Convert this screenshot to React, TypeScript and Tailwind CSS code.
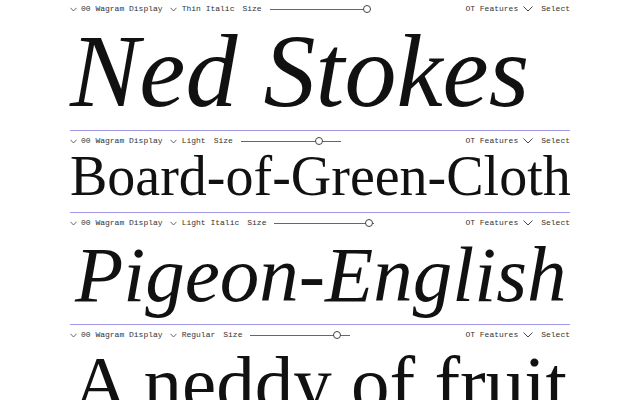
import React from "react";

type Row = {
  style: string;
  sample: string;
  italic: boolean;
  knob: number;
  blockClass: string;
  textClass: string;
};

const rows: Row[] = [
  {
    style: "Thin Italic",
    sample: "Ned Stokes",
    italic: true,
    knob: 97,
    blockClass: "h-[132px]",
    textClass: "text-[104px] leading-[104px]",
  },
  {
    style: "Light",
    sample: "Board-of-Green-Cloth",
    italic: false,
    knob: 78,
    blockClass: "h-[82px]",
    textClass: "text-[56px] leading-[50px]",
  },
  {
    style: "Light Italic",
    sample: "Pigeon-English",
    italic: true,
    knob: 95,
    blockClass: "h-[112px]",
    textClass: "text-[79px] leading-[84px] ml-[5px]",
  },
  {
    style: "Regular",
    sample: "A neddy of fruit",
    italic: false,
    knob: 87,
    blockClass: "h-[120px]",
    textClass: "text-[77px] leading-[76px] ml-[3px]",
  },
];

function Chevron({ big = false }: { big?: boolean }) {
  return big ? (
    <svg width="10" height="6" viewBox="0 0 10 6" fill="none" className="shrink-0">
      <path d="M0.5 0.5L5 5L9.5 0.5" stroke="#333" strokeWidth="0.9" />
    </svg>
  ) : (
    <svg width="7" height="5" viewBox="0 0 7 5" fill="none" className="shrink-0">
      <path d="M0.5 0.8L3.5 4L6.5 0.8" stroke="#444" strokeWidth="0.8" />
    </svg>
  );
}

function Slider({ knob }: { knob: number }) {
  return (
    <div className="relative w-[100px] h-[10px] flex items-center">
      <div className="w-full h-px bg-[#666]" />
      <div
        className="absolute top-[1px] w-[8px] h-[8px] -ml-[4px] rounded-full border border-[#444] bg-white"
        style={{ left: `${knob}%` }}
      />
    </div>
  );
}

function Toolbar({ label, knob }: { label: string; knob: number }) {
  return (
    <div className="h-[20px] flex items-center text-[8px] text-[#333] font-['Liberation_Mono',monospace] whitespace-pre">
      <Chevron />
      <span className="ml-[4px]">00 Wagram Display</span>
      <span className="ml-[7px]">
        <Chevron />
      </span>
      <span className="ml-[5px]">{label}</span>
      <span className="ml-[8px]">Size</span>
      <span className="ml-[8px]">
        <Slider knob={knob} />
      </span>
      <span className="ml-auto">OT Features</span>
      <span className="ml-[5px] flex">
        <Chevron big />
      </span>
      <span className="ml-[8px]">Select</span>
    </div>
  );
}

export default function App() {
  return (
    <div className="w-[640px] h-[400px] overflow-hidden bg-white">
      <div className="w-[500px] ml-[70px] -mt-[1px]">
        {rows.map((r, i) => (
          <div
            key={r.sample}
            className={`${r.blockClass} shrink-0 ${i < rows.length - 1 ? "border-b border-[#a097e6]" : ""}`}
          >
            <Toolbar label={r.style} knob={r.knob} />
            <div
              className={`${r.textClass} ${r.italic ? "italic" : ""} text-[#111] whitespace-nowrap font-['Liberation_Serif',serif]`}
            >
              {r.sample}
            </div>
          </div>
        ))}
      </div>
    </div>
  );
}
